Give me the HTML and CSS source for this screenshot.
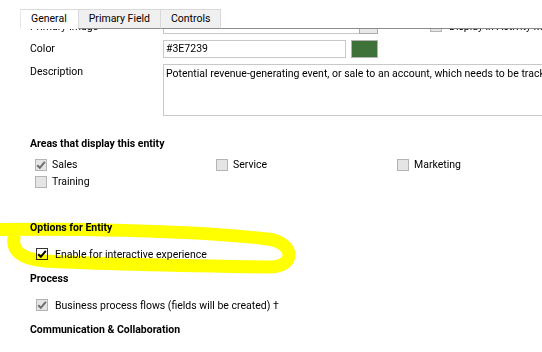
FILE: index.html
```html
<!DOCTYPE html>
<html>
<head>
<meta charset="utf-8">
<link rel="stylesheet" href="styles.css">
</head>
<body>
<div class="page">
  <div class="tabs">
    <div class="tab active">General</div>
    <div class="tab">Primary Field</div>
    <div class="tab">Controls</div>
    <div class="tab-fill"></div>
  </div>
  <div class="viewport">
    <div class="content">
      <div class="form">
        <div class="row row-img">
          <div class="label">Primary Image</div>
          <div class="img-field"><div class="img-input"></div><div class="img-btn">...</div></div>
          <div class="cb"></div>
          <span class="cb-text">Display in Activity Menus</span>
        </div>
        <div class="row row-color">
          <div class="label">Color</div>
          <div class="input color-input">#3E7239</div>
          <div class="swatch"></div>
        </div>
        <div class="row row-desc">
          <div class="label">Description</div>
          <div class="textarea">Potential revenue-generating event, or sale to an account, which needs to be tracked through a sales process to completion.</div>
        </div>
      </div>

      <div class="section-title areas-title">Areas that display this entity</div>
      <div class="areas">
        <div class="opt"><span class="cb checked-dis"><svg viewBox="0 0 12 12"><path d="M2.2 6.2 L4.8 8.8 L9.8 2.8" /></svg></span><span class="opt-text">Sales</span></div>
        <div class="opt"><span class="cb"></span><span class="opt-text">Service</span></div>
        <div class="opt"><span class="cb"></span><span class="opt-text">Marketing</span></div>
        <div class="opt"><span class="cb"></span><span class="opt-text">Training</span></div>
      </div>

      <div class="section-title options-title">Options for Entity</div>
      <div class="line-opt enable-opt"><span class="cb checked"><svg viewBox="0 0 12 12"><path d="M2.2 6.2 L4.8 8.8 L9.8 2.8" /></svg></span><span class="opt-text">Enable for interactive experience</span></div>

      <div class="section-title process-title">Process</div>
      <div class="line-opt bpf-opt"><span class="cb checked-dis"><svg viewBox="0 0 12 12"><path d="M2.2 6.2 L4.8 8.8 L9.8 2.8" /></svg></span><span class="opt-text">Business process flows (fields will be created) †</span></div>

      <div class="section-title comm-title">Communication &amp; Collaboration</div>
    </div>
  </div>
  <svg class="highlight" viewBox="0 0 542 352" width="542" height="352">
    <path d="M -20 230 C 60 228 190 230 268 239 C 296 243 296 268 268 267 C 200 266 100 264 45 261 C 20 259 12 250 14 238" />
  </svg>
</div>
</body>
</html>
```

FILE: styles.css
```css
html, body {
  margin: 0;
  padding: 0;
  background: #ffffff;
}
body {
  font-family: Roboto, "Noto Sans", sans-serif;
  font-size: 10.5px;
  color: #000000;
  width: 542px;
  height: 352px;
  overflow: hidden;
}
.page {
  position: relative;
  width: 542px;
  height: 352px;
  padding-top: 9px;
  box-sizing: border-box;
  overflow: hidden;
  isolation: isolate;
}
.tabs {
  display: flex;
  height: 20px;
  padding-left: 20px;
}
.tab {
  box-sizing: border-box;
  height: 20px;
  padding: 0 10px;
  line-height: 18px;
  border: 1px solid #d9d9d9;
  border-bottom: 1px solid #8c8c8c;
  background: #f0f0f0;
  margin-left: -1px;
}
.tab.active {
  background: #ffffff;
  border-bottom-color: #ffffff;
  border-left-color: #e6e6e6;
  margin-left: 0;
  padding: 0 11px 0 10px;
}
.tab-fill {
  flex: 1;
  border-bottom: 1px solid #8c8c8c;
}
.viewport {
  height: 323px;
  overflow: hidden;
}
.content {
  margin-top: -13px;
}
.form {
  display: flex;
  flex-direction: column;
  gap: 6px;
}
.row {
  display: flex;
  align-items: flex-start;
  padding-left: 30px;
  white-space: nowrap;
}
.row-img {
  height: 18px;
  overflow: hidden;
}
.label {
  width: 133px;
  flex: none;
  line-height: 18px;
}
.row-img .label {
  line-height: 19px;
  padding-top: 1px;
}
.img-field {
  display: flex;
  width: 215px;
  height: 18px;
  flex: none;
}
.img-input {
  flex: 1;
  border: 1px solid #c8c8c8;
  border-right: none;
}
.img-btn {
  box-sizing: border-box;
  width: 19px;
  height: 18px;
  border: 1px solid #adadad;
  background: #e8e8e8;
  font-size: 9px;
  line-height: 14px;
  text-align: center;
  color: #333;
}
.row-img .cb {
  margin-left: 52px;
  margin-top: 4px;
}
.cb-text {
  margin-left: 7px;
  line-height: 19px;
  padding-top: 1px;
  flex: none;
}
.input {
  box-sizing: border-box;
  border: 1px solid #c8c8c8;
  height: 18px;
  line-height: 16px;
  padding-left: 2px;
}
.color-input {
  width: 183px;
}
.swatch {
  box-sizing: border-box;
  width: 27px;
  height: 18px;
  margin-left: 5px;
  background: #3e7239;
  border: 1px solid #b4b4b4;
}
.textarea {
  box-sizing: border-box;
  width: 420px;
  height: 52px;
  flex: none;
  border: 1px solid #c8c8c8;
  padding: 2px 2px;
  line-height: 14px;
  white-space: nowrap;
  overflow: hidden;
}
.row-desc .label {
  line-height: 16px;
}
.section-title {
  font-weight: bold;
  padding-left: 30px;
  line-height: 14px;
}
.areas-title { margin-top: 21px; }
.areas {
  display: grid;
  grid-template-columns: 181px 181px 150px;
  grid-auto-rows: 17px;
  padding-left: 35px;
  margin-top: 5px;
}
.opt {
  display: flex;
  align-items: center;
}
.opt-text {
  margin-left: 5px;
}
.cb {
  box-sizing: border-box;
  width: 12px;
  height: 12px;
  flex: none;
  border: 1px solid #b4b4b4;
  background: #e5e5e5;
  display: inline-block;
  position: relative;
}
.cb svg {
  position: absolute;
  left: -1px;
  top: -1px;
  width: 12px;
  height: 12px;
}
.cb path {
  fill: none;
  stroke-width: 2;
}
.cb.checked-dis path {
  stroke: #6f6f6f;
}
.cb.checked {
  background: #ffffff;
  border-color: #333333;
}
.cb.checked path {
  stroke: #000000;
}
.line-opt {
  display: flex;
  align-items: center;
  height: 14px;
  padding-left: 36px;
}
.line-opt .opt-text {
  margin-left: 7px;
}
.options-title { margin-top: 31px; }
.enable-opt { margin-top: 12px; }
.process-title { margin-top: 11px; }
.bpf-opt { margin-top: 12px; }
.comm-title { margin-top: 11px; }
.highlight {
  position: absolute;
  left: 0;
  top: 0;
  pointer-events: none;
  mix-blend-mode: multiply;
}
.highlight path {
  fill: none;
  stroke: #ffff00;
  stroke-width: 13;
  stroke-linecap: round;
  stroke-linejoin: round;
}
```
